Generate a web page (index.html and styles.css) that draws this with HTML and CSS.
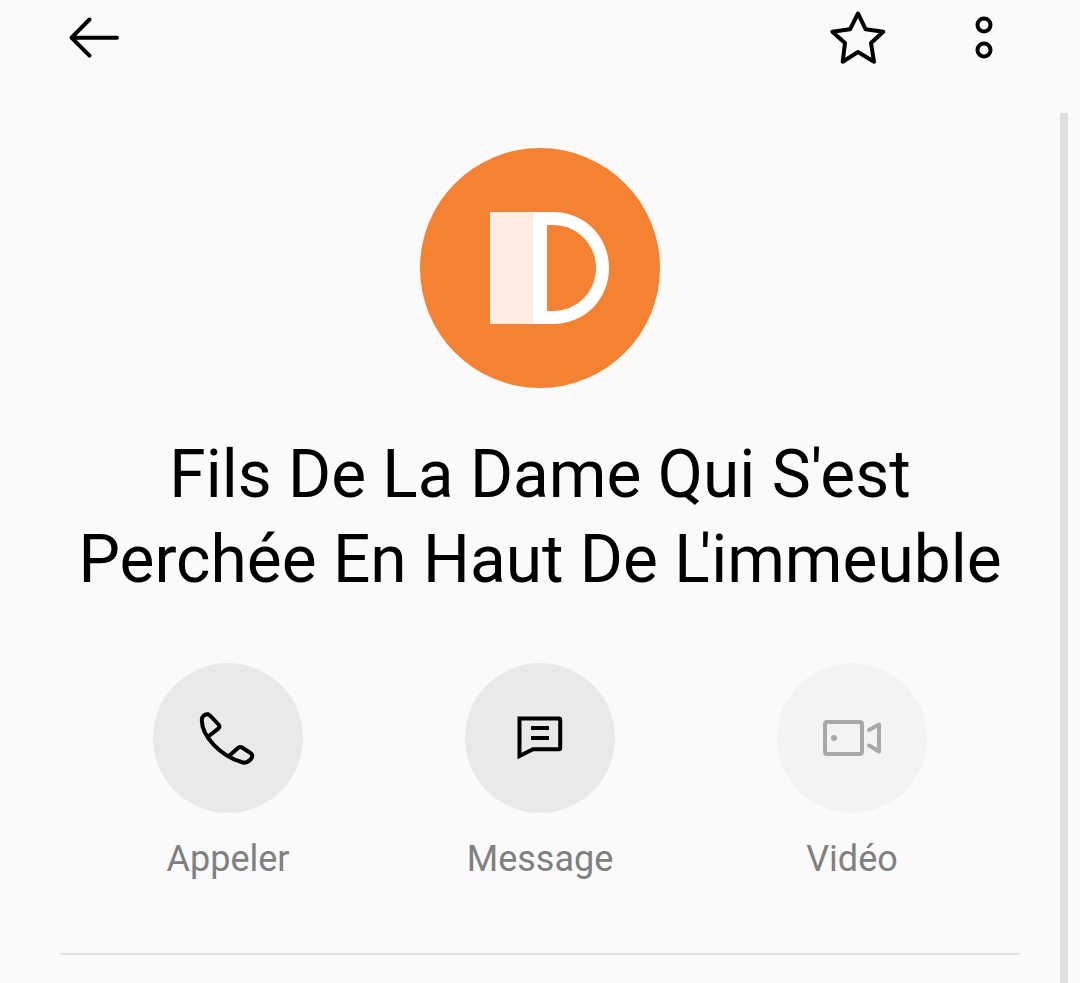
FILE: index.html
```html
<!DOCTYPE html>
<html lang="fr">
  <head>
    <meta charset="UTF-8" />
    <meta name="viewport" content="width=device-width, initial-scale=1.0" />
    <title>Contact</title>
    <link rel="stylesheet" href="styles.css">
  </head>
  <body>
    <header class="topbar">
      <svg class="icon" viewBox="0 0 60 60">
        <path class="line" d="M53 29.7H7.5M25.5 11.5L7.5 29.7L25.5 47.7" />
      </svg>
      <div class="topbar-actions">
        <svg class="icon" viewBox="0 0 60 60">
          <path class="line" d="M30 5.5L37.7 21.3L55.3 23.7L43 35L46 53.7L30 44L14.7 53.7L17 35L4.3 23.7L22 21.3Z" />
        </svg>
        <svg class="icon" viewBox="0 0 60 60">
          <circle class="line" cx="30" cy="17" r="6.5" />
          <circle class="line" cx="30" cy="42" r="6.5" />
        </svg>
      </div>
    </header>

    <main class="contact">
      <div class="avatar">
        <svg class="avatar-letter" viewBox="0 0 120 112">
          <rect class="letter-shade" x="0" y="0" width="44" height="112" />
          <path class="letter-white" fill-rule="evenodd" d="M43 0H63C95 0 119 25 119 56C119 87 95 112 63 112H43ZM57 13V99H63C87 99 106 80 106 56C106 32 87 13 63 13Z" />
        </svg>
      </div>

      <h1 class="name">Fils De La Dame Qui S'est<br />Perchée En Haut De <span class="tight">L</span>'immeuble</h1>

      <div class="actions">
        <div class="action">
          <div class="action-circle">
            <svg class="action-icon" viewBox="0 0 72 72">
              <path class="line" d="M16.3 12.5C13 11.5 9.8 14.5 9.8 18C9.8 34 28 54 51 60.5C54 61.3 56 60 58 58C61 55 61 52.5 58.5 51L50 45.5C48.5 44.7 47.3 45 46 46L38 53" />
              <path class="line" d="M16.3 12.5C17.5 13 18 13.5 19 14.5L26.5 22.5C28 24 27.7 25.5 26 26.8L16.3 34.5" />
            </svg>
          </div>
          <span class="action-label">Appeler</span>
        </div>
        <div class="action">
          <div class="action-circle">
            <svg class="action-icon" viewBox="0 0 72 72">
              <path class="line miter" d="M15.5 16.5H55C55.7 16.5 56.2 17 56.2 17.7V46C56.2 46.7 55.7 47.2 55 47.2H29L15.5 54Z" />
              <path class="line miter" d="M27 26H45M27 36H45" />
            </svg>
          </div>
          <span class="action-label">Message</span>
        </div>
        <div class="action">
          <div class="action-circle disabled">
            <svg class="action-icon" viewBox="0 0 72 72">
              <rect class="line grey" x="9" y="20" width="37" height="32" rx="2" />
              <circle class="dot" cx="18" cy="36" r="3" />
              <path class="line grey" d="M53 28L63 22.5V49.5L53 43.5" />
            </svg>
          </div>
          <span class="action-label">Vidéo</span>
        </div>
      </div>

      <hr class="divider" />
    </main>

    <div class="scrollbar"></div>
  </body>
</html>
```

FILE: styles.css
```css
html,
body {
  margin: 0;
  height: 983px;
  overflow: hidden;
}
body {
  background: #fafafa;
  color: #000;
  font-family: Roboto, "Liberation Sans", sans-serif;
}
.topbar {
  display: flex;
  justify-content: space-between;
  align-items: center;
  height: 76px;
  padding: 0 66px 0 64px;
}
.topbar-actions {
  display: flex;
  gap: 66px;
}
.icon {
  display: block;
  width: 60px;
  height: 60px;
}
.line {
  fill: none;
  stroke: #000;
  stroke-width: 4;
  stroke-linejoin: round;
  stroke-linecap: round;
}
.line.miter {
  stroke-linejoin: miter;
  stroke-linecap: butt;
}
.line.grey {
  stroke: #a8a8a8;
}
.dot {
  fill: #a8a8a8;
}
.contact {
  display: flex;
  flex-direction: column;
  align-items: center;
  padding-top: 72px;
}
.avatar {
  display: flex;
  align-items: center;
  justify-content: center;
  width: 240px;
  height: 240px;
  border-radius: 50%;
  background: #f58233;
}
.avatar-letter {
  display: block;
  width: 120px;
  height: 112px;
  margin-left: 20px;
}
.letter-shade {
  fill: #ffece2;
}
.letter-white {
  fill: #fff;
}
.name {
  margin: 44px 0 0;
  font-size: 65.8px;
  font-weight: 400;
  line-height: 85px;
  text-align: center;
  white-space: nowrap;
}
.tight {
  letter-spacing: -10px;
}
.actions {
  display: flex;
  justify-content: center;
  gap: 162px;
  margin-top: 61px;
}
.action {
  display: flex;
  flex-direction: column;
  align-items: center;
  width: 150px;
}
.action-circle {
  display: flex;
  align-items: center;
  justify-content: center;
  width: 150px;
  height: 150px;
  border-radius: 50%;
  background: #e9e9e9;
}
.action-circle.disabled {
  background: #f3f3f3;
}
.action-icon {
  display: block;
  width: 72px;
  height: 72px;
}
.action-label {
  margin-top: 24px;
  font-size: 36px;
  line-height: 44px;
  color: #808080;
}
.divider {
  align-self: stretch;
  margin: 72px 60px 0;
  border: 0;
  height: 2px;
  background: #e3e3e3;
}
.scrollbar {
  position: absolute;
  top: 113px;
  bottom: 0;
  left: 1060px;
  width: 8px;
  background: #e0e0e0;
}
```
